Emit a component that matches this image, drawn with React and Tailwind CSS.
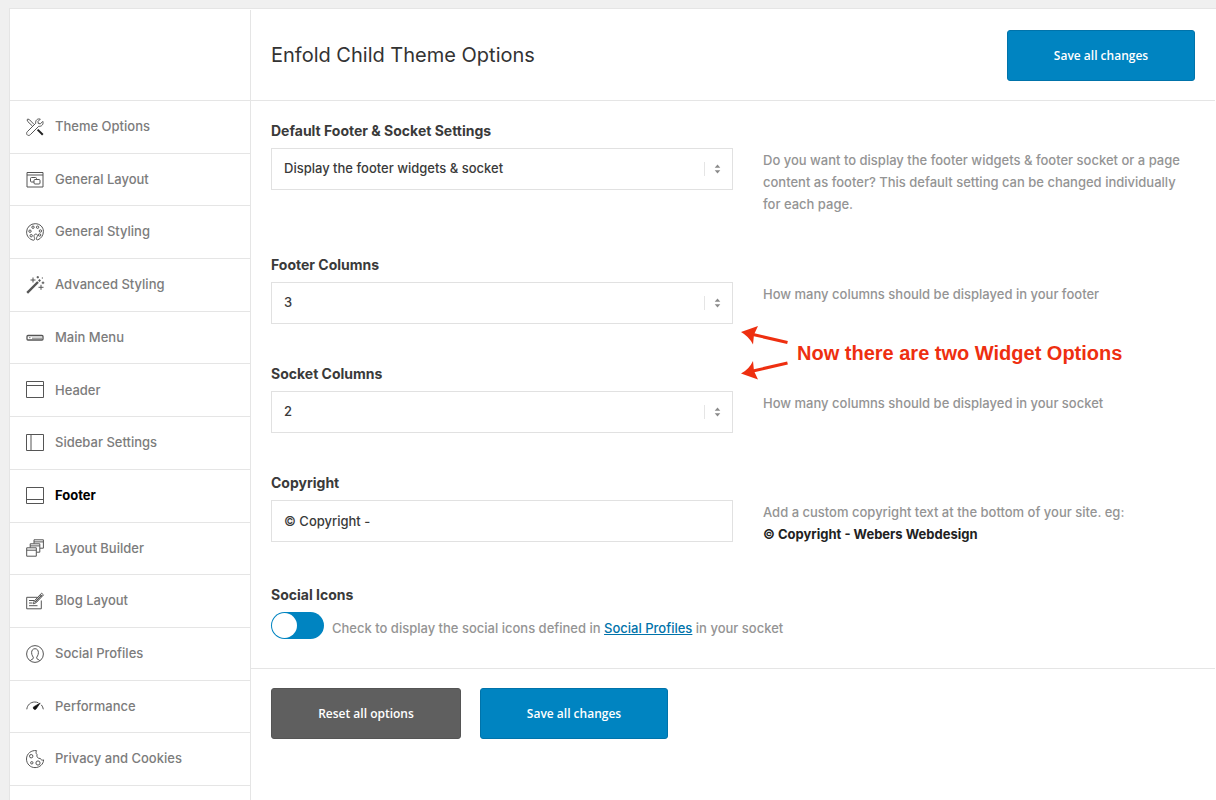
import React, { useState } from 'react';

const icons = {
    tools: (
        <>
            <path d="M16.8 3.4 14.4 5.8 12.3 5.5 12 3.5 14.3 1.1C11.6.3 9.2 2.2 9.7 5.3L1.3 13.7C.2 14.9.5 16.4 1.5 17.1c.9.6 2.1.4 2.8-.4L12.7 8.3c3 .4 5.1-2.1 4.1-4.9Z" />
            <path d="M6.4 8 1.8 3.6 1 1.8 1.9 1 3.6 1.8 8 6.4M2.9 15.1h.1" />
            <path d="m11.6 11.6 5.2 5.2" stroke="#222" strokeWidth="2" />
        </>
    ),
    layout: (
        <>
            <path d="M1 1.500h16v14.500H1zM1 4h16" />
            <rect x="4.5" y="6.5" width="6" height="4.5" rx="1" />
            <rect x="8" y="8.5" width="6" height="4.5" rx="1" fill="white" />
        </>
    ),
    palette: (
        <>
            <path d="M7.400 17.200C3.400 16.500.600 13.100.600 9.100A8.400 8.400 0 0 1 9.200.700c4.700 0 8.200 3.300 8.200 7.600 0 4.100-2.300 7.300-5.600 8.500-1.300.4-1.500-.6-1.300-1.700.3-1.300 1.600-2.200.7-3.400-.8-1-2.700-.7-3.100.6-.4 1.500 1 3 .4 4.300-.2.5-.6.7-1.100.600Z" />
            <circle cx="7" cy="4.2" r="1.2" />
            <circle cx="11.6" cy="4.2" r="1.2" />
            <circle cx="14.4" cy="8" r="1.2" />
            <circle cx="4" cy="8.2" r="1.2" />
            <circle cx="5.2" cy="12.7" r="1.2" />
            <circle cx="13.6" cy="12" r="1.2" />
        </>
    ),
    wand: (
        <>
            <path d="M1.2 16.8 12 6" strokeWidth="2.4" />
            <path d="m12.8 5.2 1.4-1.4" strokeWidth="2" />
            <path d="M7 1.5v5M4.500 4h5M15 8.800v5M12.500 11.300h5" />
            <path d="M11.8 0v2.400M10.600 1.200h2.400M17 5.500v2.600M15.700 6.800h2.600M15.800 2h1.200" />
        </>
    ),
    menu: (
        <>
            <rect x="1" y="6.5" width="16" height="4.5" rx="1" strokeWidth="1.3" />
            <path d="M3 8.700h1.500M6 9.200h10" strokeWidth=".8" />
        </>
    ),
    header: <path d="M.5.5h17v16H.5zM.5 4.500h17" />,
    sidebar: <path d="M.5.5h17v16H.5zM5 .5v16" />,
    footer: <path d="M.5.5h17v16H.5zM.5 12.500h17" />,
    builder: (
        <>
            <path d="M.7 8.8h9.6v8.4H.7zM.7 11.2h9.6" />
            <path d="M4.2 8.6V4.8h9.6v8.4h-3.3M4.2 6.9h9.6" />
            <path d="M8 4.6V.8h9.4v8.4H14M8 2.9h9.4" />
        </>
    ),
    blog: (
        <>
            <path d="M11.5 5.3H.7v11.5h14.6V8.5M3 8.5h5M3 11h3.5M3 13.7h8.5" />
            <path d="m7.3 11.8 1-2.9L15.6 1.2l1.9 1.7-7.3 7.8ZM14.2 2.8l1.8 1.7" />
            <path d="m9.200 10 6.500-6.800" strokeWidth="1.200" />
        </>
    ),
    profile: (
        <>
            <circle cx="9" cy="9" r="8.4" />
            <path d="M4.2 15.8c.4-1.2 3.2-1.4 3.2-2.9 0-1.1-1.8-2.4-1.8-5.2 0-2.5 1.4-4 3.4-4s3.4 1.5 3.4 4c0 2.8-1.8 4.1-1.8 5.2 0 1.5 2.8 1.7 3.2 2.9" />
        </>
    ),
    gauge: (
        <>
            <path d="M.8 12.3C1.2 8 4.6 5 8.8 5c1.3 0 2.5.3 3.6.8M15.3 7.8c1.1 1.2 1.8 2.8 2 4.5" />
            <path d="M14.2 6 9.9 12.2A1.7 1.7 0 0 1 7.5 9.9Z" fill="#111" stroke="#111" strokeWidth=".6" />
        </>
    ),
    cookie: (
        <>
            <path d="M10.6.7C5.5-.2.5 3.6.5 9c0 4.9 3.8 8.6 8.5 8.6 4.9 0 8.5-3.6 8.6-7.7-1.5.6-2.8 0-3.2-1.4-2.5.2-4.1-1.6-3.4-4C9.9 3.7 9.7 2 10.6.7Z" />
            <circle cx="5.2" cy="6.2" r="1.7" />
            <circle cx="5.8" cy="12.8" r="1.2" />
            <circle cx="12" cy="13" r="2.1" />
        </>
    ),
};

const menuItems = [
    { icon: 'tools', text: 'Theme Options' },
    { icon: 'layout', text: 'General Layout' },
    { icon: 'palette', text: 'General Styling' },
    { icon: 'wand', text: 'Advanced Styling' },
    { icon: 'menu', text: 'Main Menu' },
    { icon: 'header', text: 'Header' },
    { icon: 'sidebar', text: 'Sidebar Settings' },
    { icon: 'footer', text: 'Footer' },
    { icon: 'builder', text: 'Layout Builder' },
    { icon: 'blog', text: 'Blog Layout' },
    { icon: 'profile', text: 'Social Profiles' },
    { icon: 'gauge', text: 'Performance' },
    { icon: 'cookie', text: 'Privacy and Cookies' },
];

const Sidebar = ({ active, onSelect }) => (
    <aside className="w-[241px] shrink-0 border-r border-[#e5e5e5]">
        <div className="h-[91px] border-b border-[#e5e5e5]"></div>
        <nav>
            <ul className="grid min-h-[685px] auto-rows-fr">
                {menuItems.map((item) => (
                    <li key={item.text} className="border-b border-[#e5e5e5]">
                        <a
                            href="#"
                            onClick={() => onSelect(item.text)}
                            className={`flex h-full items-center gap-[11px] pl-4 text-[13px] ${active === item.text ? 'font-bold text-black' : 'font-medium text-[#7c7c7c]'}`}
                        >
                            <svg
                                viewBox="0 0 18 18"
                                className="size-[18px] shrink-0 overflow-visible"
                                fill="none"
                                stroke="#555"
                                strokeWidth="1"
                                aria-hidden="true"
                            >
                                {icons[item.icon]}
                            </svg>
                            {item.text}
                        </a>
                    </li>
                ))}
            </ul>
        </nav>
    </aside>
);

const Button = ({ children, className }) => (
    <button
        type="button"
        className={`h-[51px] rounded-[3px] border pt-px font-['Open_Sans',sans-serif] text-xs font-semibold text-white ${className}`}
    >
        {children}
    </button>
);

const SaveButton = () => (
    <Button className="w-[188px] border-[#0073aa] bg-[#0084c1] hover:bg-[#0073aa]">Save all changes</Button>
);

const Setting = ({ id, title, description, children }) => (
    <div className="grid grid-cols-2">
        <div>
            <label htmlFor={id} className="mb-1.5 block text-sm leading-[22px] font-bold text-[#3a3a3a]">
                {title}
            </label>
            {children}
        </div>
        <div className="pt-[29px] pl-[30px] text-[13px] leading-[22px] font-medium text-[#949494]">{description}</div>
    </div>
);

const Select = ({ id, options, initial }) => {
    const [value, setValue] = useState(initial);

    return (
        <div className="relative">
            <select
                id={id}
                value={value}
                onChange={(e) => setValue(e.target.value)}
                className="h-[42px] w-full appearance-none border border-[#e1e1e1] bg-white px-3 text-[13px] font-medium text-[#3a3a3a]"
            >
                {options.map((option) => (
                    <option key={option} value={option}>{option}</option>
                ))}
            </select>
            <div className="pointer-events-none absolute inset-y-0 right-3 flex items-center gap-[9px]">
                <span className="h-[14px] w-px bg-[#e5e5e5]"></span>
                <svg viewBox="0 0 7 10" className="h-[10px] w-[7px]" fill="#8a8a8a" aria-hidden="true">
                    <path d="M3.5.6 6.3 3.7H.7ZM3.5 9.4.7 6.3h5.6Z" />
                </svg>
            </div>
        </div>
    );
};

const WidgetNote = () => (
    <div className="pointer-events-none absolute top-[72px] left-1/2 ml-2 flex items-center gap-2">
        <svg viewBox="0 0 48 54" className="h-[54px] w-[48px]" fill="#ee2f10" stroke="#ee2f10" aria-hidden="true">
            <path d="M12 8.500 46.500 16.500" strokeWidth="3" />
            <path d="M0 6 17 0 13 8.500 12 18.500Q8 10.500 0 6Z" stroke="none" />
            <path d="M12 45 46.500 37" strokeWidth="3" />
            <path d="M0 47.500Q8 43.500 12 35L13 45 17 53.500Z" stroke="none" />
        </svg>
        <p className="font-['Liberation_Sans',sans-serif] text-xl font-bold whitespace-nowrap text-[#ee2f10]">
            Now there are two Widget Options
        </p>
    </div>
);

const columns = ['1', '2', '3', '4', '5'];

export default function App() {
    const [active, setActive] = useState('Footer');
    const [copyright, setCopyright] = useState('© Copyright -');

    return (
        <div className="min-h-screen bg-[#f0f0f0] pt-2 pl-[9px] font-[Inter,sans-serif]">
            <div className="flex min-h-[calc(100vh-8px)] border-t border-l border-[#e5e5e5] bg-white pt-px pr-px">
                <Sidebar active={active} onSelect={setActive} />
                <main className="min-w-0 flex-1">
                    <header className="flex h-[91px] items-center justify-between border-b border-[#e5e5e5] px-5">
                        <h1 className="text-xl text-[#333]">Enfold Child Theme Options</h1>
                        <SaveButton />
                    </header>

                    <form className="flex flex-col gap-[39px] border-b border-[#e5e5e5] px-5 pt-[19px] pb-[29px]">
                        <Setting
                            id="footer-display"
                            title="Default Footer & Socket Settings"
                            description="Do you want to display the footer widgets & footer socket or a page content as footer? This default setting can be changed individually for each page."
                        >
                            <Select
                                id="footer-display"
                                initial="Display the footer widgets & socket"
                                options={['Display the footer widgets & socket']}
                            />
                        </Setting>

                        <div className="relative">
                            <Setting
                                id="footer-columns"
                                title="Footer Columns"
                                description="How many columns should be displayed in your footer"
                            >
                                <Select id="footer-columns" initial="3" options={columns} />
                            </Setting>
                            <WidgetNote />
                        </div>

                        <Setting
                            id="socket-columns"
                            title="Socket Columns"
                            description="How many columns should be displayed in your socket"
                        >
                            <Select id="socket-columns" initial="2" options={columns} />
                        </Setting>

                        <Setting
                            id="copyright"
                            title="Copyright"
                            description={
                                <>
                                    Add a custom copyright text at the bottom of your site. eg:
                                    <strong className="block font-bold text-[#222]">© Copyright - Webers Webdesign</strong>
                                </>
                            }
                        >
                            <input
                                id="copyright"
                                type="text"
                                value={copyright}
                                onChange={(e) => setCopyright(e.target.value)}
                                className="h-[42px] w-full border border-[#e1e1e1] bg-white px-3 text-[13px] font-medium text-[#3a3a3a]"
                            />
                        </Setting>

                        <div>
                            <label htmlFor="social-icons" className="mb-1.5 block text-sm leading-[22px] font-bold text-[#3a3a3a]">
                                Social Icons
                            </label>
                            <div className="flex items-center gap-2">
                                <input
                                    id="social-icons"
                                    type="checkbox"
                                    className="flex h-[27px] w-[53px] shrink-0 appearance-none rounded-full bg-[#0084c1] p-px before:size-[25px] before:rounded-full before:bg-white checked:justify-end"
                                />
                                <p className="pt-1 text-[13px] leading-[22px] font-medium text-[#949494]">
                                    Check to display the social icons defined in{' '}
                                    <a href="#" className="text-[#0073aa] underline">Social Profiles</a> in your socket
                                </p>
                            </div>
                        </div>
                    </form>

                    <div className="flex gap-[19px] px-5 py-[19px]">
                        <Button className="w-[190px] border-[#555] bg-[#5f5f5f] hover:bg-[#555]">Reset all options</Button>
                        <SaveButton />
                    </div>
                </main>
            </div>
        </div>
    );
}
